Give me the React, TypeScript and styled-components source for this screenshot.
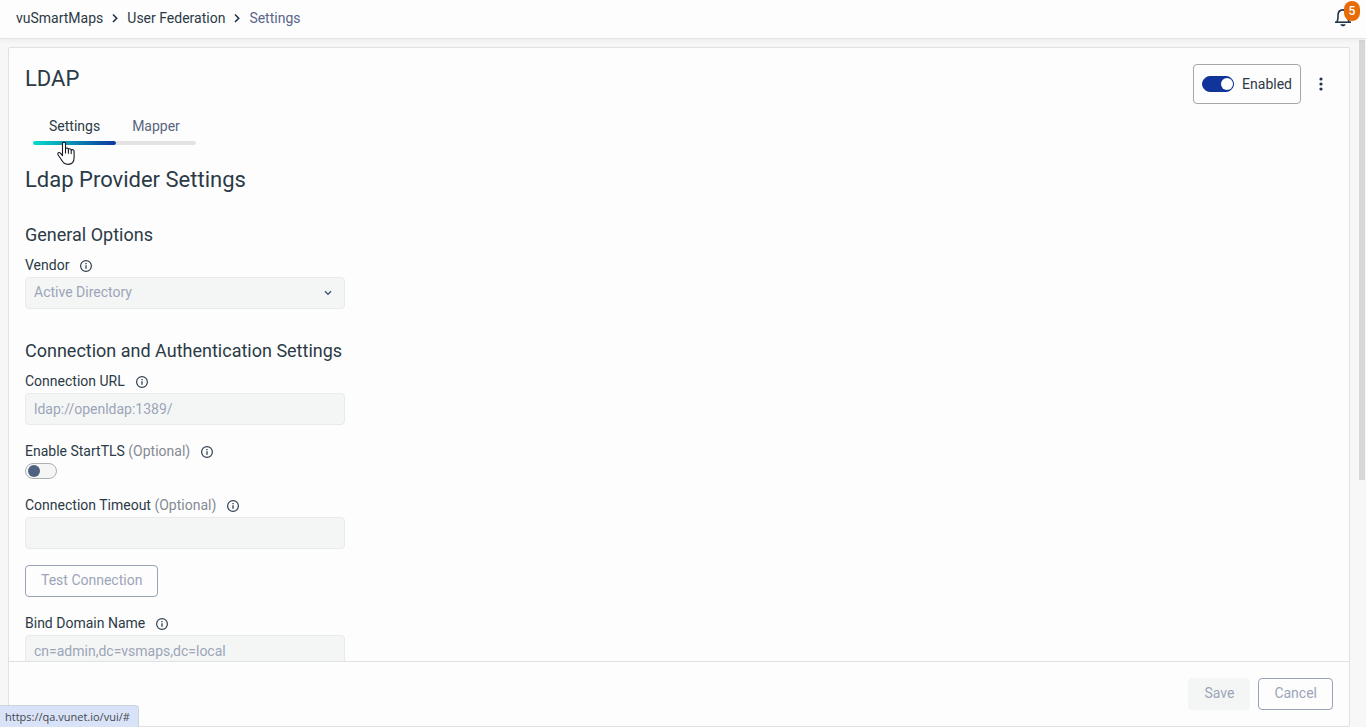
import React from 'react';
import styled, { createGlobalStyle } from 'styled-components';

const GlobalStyle = createGlobalStyle`
  *, *::before, *::after { box-sizing: border-box; }
  body {
    margin: 0;
    background: #f7f7f7;
    color: #2b3a46;
    font: 400 14px/20px Roboto, 'Liberation Sans', sans-serif;
  }
  button, input, select { font: inherit; }
`;

const Page = styled.div`
  display: flex;
  flex-direction: column;
  height: 100vh;
`;

const TopBar = styled.header`
  display: flex;
  align-items: center;
  justify-content: space-between;
  height: 39px;
  padding: 0 15px 2px 16px;
  background: #fdfdfd;
  border-bottom: 1px solid #e2e3e4;
  box-shadow: 0 2px 4px rgba(0, 0, 0, 0.04);
  z-index: 1;
`;

const Crumbs = styled.ol`
  display: flex;
  align-items: center;
  gap: 8px;
  margin: 0;
  padding: 0;
  list-style: none;
`;

const Crumb = styled.li`
  display: flex;
  align-items: center;
  gap: 8px;
`;

const CrumbLink = styled.a<{ $current?: boolean }>`
  color: ${(p) => (p.$current ? '#5a668a' : '#2b3a46')};
  text-decoration: none;
`;

const BellButton = styled.button`
  position: relative;
  display: flex;
  width: 16px;
  height: 20px;
  padding: 0;
  border: 0;
  background: none;
  color: #22344a;
`;

const Badge = styled.span`
  position: absolute;
  top: -7px;
  right: -9px;
  min-width: 16px;
  height: 20px;
  border-radius: 8px;
  background: #e86c06;
  color: #fff;
  font-size: 12px;
  font-weight: 500;
  line-height: 20px;
  text-align: center;
`;

const Main = styled.main`
  display: flex;
  flex: 1;
  min-height: 0;
  padding: 8px 0 0 8px;
`;

const Card = styled.form`
  display: flex;
  flex: 1;
  flex-direction: column;
  min-width: 0;
  background: #fdfdfd;
  border: 1px solid #dfe1e3;
  border-radius: 2px;
`;

const ScrollRail = styled.div`
  width: 16px;
  margin-top: -8px;
  padding: 1px 1px 0 9px;
`;

const ScrollThumb = styled.div`
  height: 64%;
  background: #d6d7d9;
`;

const Body = styled.div`
  flex: 1;
  min-height: 0;
  padding: 16px;
  overflow: hidden;
`;

const TitleRow = styled.div`
  display: flex;
  justify-content: space-between;
  height: 40px;
`;

const Title = styled.h1`
  margin: 0;
  font-size: 22px;
  font-weight: 400;
  line-height: 30px;
`;

const Actions = styled.div`
  display: flex;
  align-items: center;
  gap: 12px;
`;

const EnabledBox = styled.label`
  display: flex;
  align-items: center;
  gap: 8px;
  height: 40px;
  padding: 0 8px;
  border: 1px solid #a3a6aa;
  border-radius: 4px;
`;

const Switch = styled.input`
  display: block;
  flex: none;
  appearance: none;
  width: 32px;
  height: 16px;
  margin: 0;
  padding: 1px 2px;
  border: 1px solid #adb0b4;
  border-radius: 8px;
  background: #f4f6f6;

  &::before {
    content: '';
    display: block;
    width: 12px;
    height: 12px;
    border-radius: 50%;
    background: #4f6180;
  }

  &:checked {
    border-color: #11349b;
    background: #11349b;
  }

  &:checked::before {
    margin-left: 16px;
    background: #fdfdfd;
  }
`;

const MenuButton = styled.button`
  display: flex;
  justify-content: center;
  width: 16px;
  margin-right: 4px;
  padding: 0;
  border: 0;
  background: none;
  color: #22344a;
`;

const Tabs = styled.div`
  display: flex;
  margin: 0 8px 20px;
`;

const Tab = styled.button<{ $active?: boolean }>`
  padding: 12px 16px 0;
  border: 0;
  background: none;
  color: ${(p) => (p.$active ? '#2b3a46' : '#5a647e')};

  &::after {
    content: '';
    display: block;
    height: 4px;
    margin: 5px -16px 0;
    border-radius: ${(p) => (p.$active ? '2px' : '0 2px 2px 0')};
    background: ${(p) => (p.$active ? 'linear-gradient(90deg, #04dccb, #11349b)' : '#e3e3e4')};
  }
`;

const PageHeading = styled.h2`
  margin: 0;
  font-size: 22px;
  font-weight: 400;
  line-height: 30px;
`;

const Section = styled.section`
  display: flex;
  flex-direction: column;
  align-items: flex-start;
  gap: 16px;
  margin-top: 30px;

  ${PageHeading} + & { margin-top: 28px; }
`;

const SectionHeading = styled.h3`
  margin: 0 0 -8px;
  font-size: 18px;
  font-weight: 400;
  line-height: 24px;
`;

const FieldBlock = styled.div`
  display: flex;
  flex-direction: column;
  gap: 2px;
  width: 320px;
`;

const LabelRow = styled.div`
  display: flex;
  align-items: center;
  gap: 10px;
`;

const Optional = styled.span`
  color: #858a93;
`;

const InfoButton = styled.button`
  display: flex;
  padding: 2px 0 0;
  border: 0;
  background: none;
  color: #2f3f52;
`;

const TextInput = styled.input`
  width: 100%;
  height: 32px;
  padding: 0 8px;
  border: 1px solid #e8ebeb;
  border-radius: 4px;
  background: #f4f6f6;
  color: #9ca5b8;
`;

const SelectWrap = styled.div`
  display: grid;
  align-items: center;

  > * { grid-area: 1 / 1; }
  > svg { justify-self: end; margin-right: 13px; color: #44567a; pointer-events: none; }
`;

const Select = styled.select`
  appearance: none;
  width: 100%;
  height: 32px;
  padding: 0 8px 2px;
  border: 1px solid #e8ebeb;
  border-radius: 4px;
  background: #f4f6f6;
  color: #9ca5b8;
  opacity: 1;
`;

const Button = styled.button<{ $filled?: boolean }>`
  height: 32px;
  padding: 0 15px 2px;
  border: 1px solid ${(p) => (p.$filled ? '#f4f6f6' : '#97a3b6')};
  border-radius: 4px;
  background: ${(p) => (p.$filled ? '#f4f6f6' : 'transparent')};
  color: #9ca5b8;
`;

const Footer = styled.footer`
  display: flex;
  justify-content: flex-end;
  gap: 8px;
  padding: 16px;
  border-top: 1px solid #dfe1e3;
`;

const StatusBubble = styled.div`
  position: fixed;
  left: 0;
  bottom: 0;
  z-index: 2;
  height: 22px;
  padding: 0 8px 0 5px;
  border-top: 1px solid #cdd3de;
  border-right: 1px solid #cdd3de;
  border-top-right-radius: 4px;
  background: #d9e3f8;
  color: #45484e;
  font: 11px/22px 'Open Sans', 'Noto Sans', sans-serif;
`;

const Pointer = styled.svg`
  position: absolute;
  left: 56px;
  top: 140px;
  z-index: 3;
  pointer-events: none;
`;

const Chevron = () => (
  <svg width="8" height="12" viewBox="0 0 8 12" fill="none" stroke="#22344a" strokeWidth="1.6" aria-hidden="true">
    <path d="M2 2.5 5.7 6.2 2 10" />
  </svg>
);

const InfoIcon = () => (
  <svg width="14" height="14" viewBox="0 0 14 14" fill="none" stroke="currentColor" aria-hidden="true">
    <circle cx="7" cy="7" r="5.4" strokeWidth="1.2" />
    <path d="M7 6.2v3.6M7 4v1.2" strokeWidth="1.3" />
  </svg>
);

type FieldProps = {
  id: string;
  label: string;
  optional?: boolean;
  children: React.ReactNode;
};

const Field = ({ id, label, optional, children }: FieldProps) => (
  <FieldBlock>
    <LabelRow>
      <label htmlFor={id}>
        {label}
        {optional && <Optional> (Optional)</Optional>}
      </label>
      <InfoButton type="button" aria-label={`About ${label}`}>
        <InfoIcon />
      </InfoButton>
    </LabelRow>
    {children}
  </FieldBlock>
);

export default function App() {
  return (
    <Page>
      <GlobalStyle />
      <TopBar>
        <nav aria-label="Breadcrumb">
          <Crumbs>
            <Crumb><CrumbLink href="#">vuSmartMaps</CrumbLink><Chevron /></Crumb>
            <Crumb><CrumbLink href="#">User Federation</CrumbLink><Chevron /></Crumb>
            <Crumb><CrumbLink href="#" $current aria-current="page">Settings</CrumbLink></Crumb>
          </Crumbs>
        </nav>
        <BellButton type="button" aria-label="Notifications">
          <svg width="16" height="20" viewBox="0 0 16 20" fill="none" stroke="currentColor" strokeWidth="1.6" aria-hidden="true">
            <path d="M0 14.200h16" />
            <path d="M1.800 14C2.700 12.600 3 11.400 3 9.800V7.400C3 4 5 1.900 8 1.900s5 2.100 5 5.500v2.400c0 1.600.3 2.800 1.200 4.200" />
            <path d="M5.300 16.200h5.400c-.5 1.400-1.500 2-2.700 2s-2.200-.6-2.700-2z" fill="currentColor" stroke="none" />
          </svg>
          <Badge>5</Badge>
        </BellButton>
      </TopBar>
      <Main>
        <Card>
          <Body>
            <TitleRow>
              <Title>LDAP</Title>
              <Actions>
                <EnabledBox>
                  <Switch type="checkbox" role="switch" defaultChecked />
                  Enabled
                </EnabledBox>
                <MenuButton type="button" aria-label="More actions">
                  <svg width="4" height="14" viewBox="0 0 4 14" fill="currentColor" aria-hidden="true">
                    <circle cx="2" cy="2" r="1.6" />
                    <circle cx="2" cy="7" r="1.6" />
                    <circle cx="2" cy="12" r="1.6" />
                  </svg>
                </MenuButton>
              </Actions>
            </TitleRow>
            <Tabs role="tablist">
              <Tab type="button" role="tab" aria-selected="true" $active>Settings</Tab>
              <Tab type="button" role="tab" aria-selected="false">Mapper</Tab>
            </Tabs>
            <PageHeading>Ldap Provider Settings</PageHeading>
            <Section>
              <SectionHeading>General Options</SectionHeading>
              <Field id="vendor" label="Vendor">
                <SelectWrap>
                  <Select id="vendor" disabled>
                    <option>Active Directory</option>
                  </Select>
                  <svg width="8" height="6" viewBox="0 0 8 6" fill="none" stroke="currentColor" strokeWidth="1.5" aria-hidden="true">
                    <path d="M1 1.200 4 4.200 7 1.200" />
                  </svg>
                </SelectWrap>
              </Field>
            </Section>
            <Section>
              <SectionHeading>Connection and Authentication Settings</SectionHeading>
              <Field id="url" label="Connection URL">
                <TextInput id="url" disabled defaultValue="ldap://openldap:1389/" />
              </Field>
              <Field id="tls" label="Enable StartTLS" optional>
                <Switch id="tls" type="checkbox" role="switch" disabled />
              </Field>
              <Field id="timeout" label="Connection Timeout" optional>
                <TextInput id="timeout" disabled />
              </Field>
              <Button type="button" disabled>Test Connection</Button>
              <Field id="bind" label="Bind Domain Name">
                <TextInput id="bind" disabled defaultValue="cn=admin,dc=vsmaps,dc=local" />
              </Field>
            </Section>
          </Body>
          <Footer>
            <Button type="submit" disabled $filled>Save</Button>
            <Button type="button">Cancel</Button>
          </Footer>
        </Card>
        <ScrollRail>
          <ScrollThumb />
        </ScrollRail>
      </Main>
      <StatusBubble>https://qa.vunet.io/vui/#</StatusBubble>
      <Pointer width="20" height="26" viewBox="0 0 20 26" fill="#fff" stroke="#1a1a2a" strokeWidth="1.1" strokeLinejoin="round" strokeLinecap="round" aria-hidden="true">
        <path d="M6.5 15.6V3.6c0-2 3-2 3 0V9c.3-1.400 2.800-1.200 2.900.5.5-1.200 2.700-.9 2.800.7.7-1 2.900-.6 2.900 1.200v6.200c0 4.400-2.600 6.800-6.100 6.800-3.300 0-4.900-1.500-6.600-4.600L2 14.800c-.9-1.900 1-3 2.400-1.600z" />
        <path d="M9.500 9v4M12.400 9.800V13.300M15.200 10.600V13.600" />
      </Pointer>
    </Page>
  );
}
